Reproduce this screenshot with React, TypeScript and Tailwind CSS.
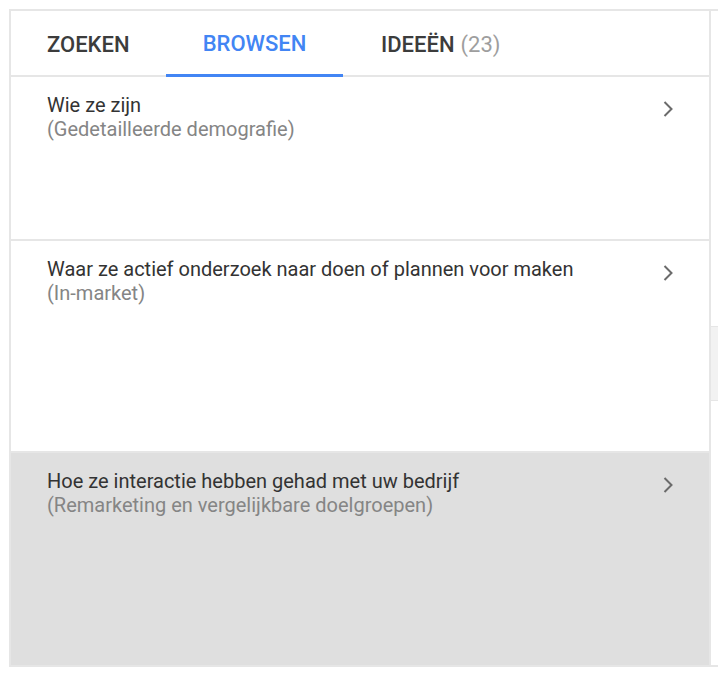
import React from "react";

const rows = [
  { title: "Wie ze zijn", sub: "(Gedetailleerde demografie)", h: "h-[164px]", active: false },
  { title: "Waar ze actief onderzoek naar doen of plannen voor maken", sub: "(In-market)", h: "h-[212px]", active: false },
  { title: "Hoe ze interactie hebben gehad met uw bedrijf", sub: "(Remarketing en vergelijkbare doelgroepen)", h: "h-[212px]", active: true },
];

const Chevron = () => (
  <svg width="14" height="18" viewBox="0 0 14 18" className="shrink-0">
    <path d="M3.5 2 L10.5 9 L3.5 16" fill="none" stroke="#6b6b6b" strokeWidth="2" />
  </svg>
);

export default function App() {
  return (
    <div className="w-[725px] h-[679px] bg-white pt-[9px] pl-[9px]" style={{ fontFamily: "Roboto, 'Liberation Sans', sans-serif" }}>
      <div className="w-[709px] flex border-t-2 border-b-2 border-[#e6e6e6]">
        <div className="w-[702px] border-l-2 border-r-2 border-[#e6e6e6]">
          {/* tabs */}
          <div className="h-[66px] flex items-stretch border-b-2 border-[#e6e6e6] text-[22px] font-medium">
            <div className="w-[155px] flex items-center pl-[36px] pt-[2px] text-[#3c3c3c]">ZOEKEN</div>
            <div className="w-[177px] flex items-center justify-center pt-[2px] text-[#4285f4] border-b-[3px] border-[#4285f4] -mb-[2px]">BROWSEN</div>
            <div className="pl-[38px] pt-[2px] flex items-center text-[#3c3c3c]">
              IDEEËN<span className="ml-[6px] font-normal text-[#9e9e9e]">(23)</span>
            </div>
          </div>
          {rows.map((r, i) => (
            <div
              key={i}
              className={`${r.h} flex items-start justify-between pl-[36px] pr-[34px] pt-[16px] ${i < 2 ? "border-b-2 border-[#e6e6e6]" : ""} ${r.active ? "bg-[#dfdfdf]" : "bg-white"}`}
            >
              <div className="text-[20px] leading-[24px]">
                <div className="text-[#333]">{r.title}</div>
                <div className="text-[#858585]">{r.sub}</div>
              </div>
              <div className="pt-[7px]">
                <Chevron />
              </div>
            </div>
          ))}
        </div>
        <div className="w-[7px] pt-[315px]">
          <div className="h-[75px] bg-[#f2f2f2] border-y border-[#e6e6e6]" />
        </div>
      </div>
    </div>
  );
}
